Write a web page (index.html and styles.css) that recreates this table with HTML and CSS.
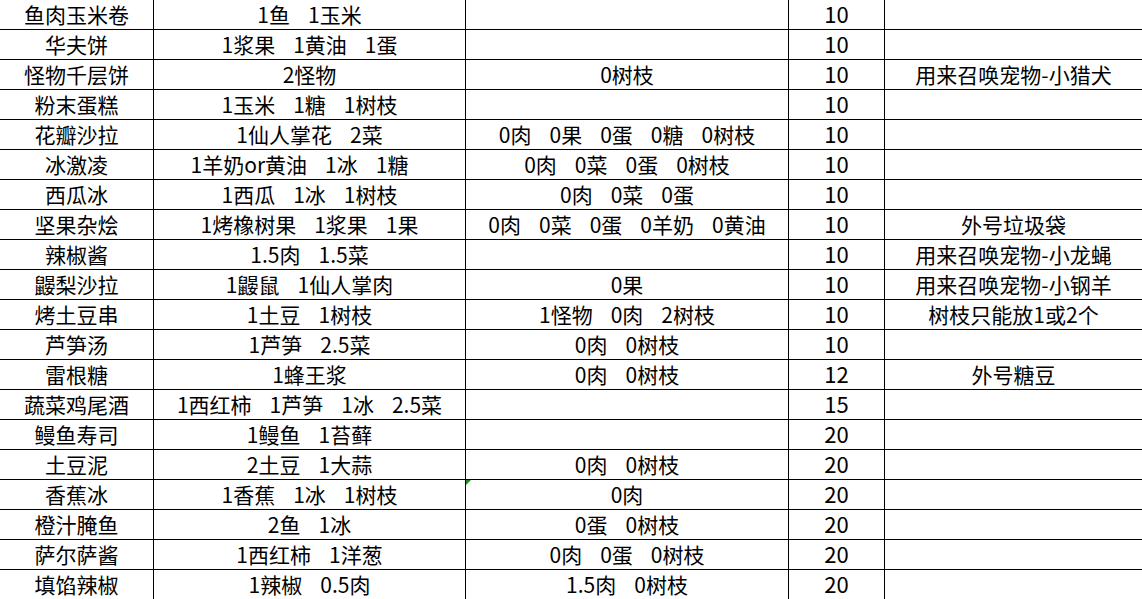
FILE: index.html
```html
<!DOCTYPE html>
<html lang="zh-CN">
<head>
<meta charset="utf-8">
<title>食谱</title>
<link rel="stylesheet" href="styles.css">
</head>
<body>
<div class="sheet">
  <div class="row"><div class="c c1">鱼肉玉米卷</div><div class="c c2"><span>1鱼</span><span>1玉米</span></div><div class="c c3"></div><div class="c c4">10</div><div class="c c5"></div></div>
  <div class="row"><div class="c c1">华夫饼</div><div class="c c2"><span>1浆果</span><span>1黄油</span><span>1蛋</span></div><div class="c c3"></div><div class="c c4">10</div><div class="c c5"></div></div>
  <div class="row"><div class="c c1">怪物千层饼</div><div class="c c2"><span>2怪物</span></div><div class="c c3"><span>0树枝</span></div><div class="c c4">10</div><div class="c c5">用来召唤宠物-小猎犬</div></div>
  <div class="row"><div class="c c1">粉末蛋糕</div><div class="c c2"><span>1玉米</span><span>1糖</span><span>1树枝</span></div><div class="c c3"></div><div class="c c4">10</div><div class="c c5"></div></div>
  <div class="row"><div class="c c1">花瓣沙拉</div><div class="c c2"><span>1仙人掌花</span><span>2菜</span></div><div class="c c3"><span>0肉</span><span>0果</span><span>0蛋</span><span>0糖</span><span>0树枝</span></div><div class="c c4">10</div><div class="c c5"></div></div>
  <div class="row"><div class="c c1">冰激凌</div><div class="c c2 shift"><span>1羊奶or黄油</span><span>1冰</span><span>1糖</span></div><div class="c c3"><span>0肉</span><span>0菜</span><span>0蛋</span><span>0树枝</span></div><div class="c c4">10</div><div class="c c5"></div></div>
  <div class="row"><div class="c c1">西瓜冰</div><div class="c c2"><span>1西瓜</span><span>1冰</span><span>1树枝</span></div><div class="c c3"><span>0肉</span><span>0菜</span><span>0蛋</span></div><div class="c c4">10</div><div class="c c5"></div></div>
  <div class="row"><div class="c c1">坚果杂烩</div><div class="c c2"><span>1烤橡树果</span><span>1浆果</span><span>1果</span></div><div class="c c3"><span>0肉</span><span>0菜</span><span>0蛋</span><span>0羊奶</span><span>0黄油</span></div><div class="c c4">10</div><div class="c c5">外号垃圾袋</div></div>
  <div class="row"><div class="c c1">辣椒酱</div><div class="c c2"><span>1.5肉</span><span>1.5菜</span></div><div class="c c3"></div><div class="c c4">10</div><div class="c c5">用来召唤宠物-小龙蝇</div></div>
  <div class="row"><div class="c c1">鼹梨沙拉</div><div class="c c2"><span>1鼹鼠</span><span>1仙人掌肉</span></div><div class="c c3"><span>0果</span></div><div class="c c4">10</div><div class="c c5">用来召唤宠物-小钢羊</div></div>
  <div class="row"><div class="c c1">烤土豆串</div><div class="c c2"><span>1土豆</span><span>1树枝</span></div><div class="c c3"><span>1怪物</span><span>0肉</span><span>2树枝</span></div><div class="c c4">10</div><div class="c c5">树枝只能放1或2个</div></div>
  <div class="row"><div class="c c1">芦笋汤</div><div class="c c2"><span>1芦笋</span><span>2.5菜</span></div><div class="c c3"><span>0肉</span><span>0树枝</span></div><div class="c c4">10</div><div class="c c5"></div></div>
  <div class="row"><div class="c c1">雷根糖</div><div class="c c2"><span>1蜂王浆</span></div><div class="c c3"><span>0肉</span><span>0树枝</span></div><div class="c c4">12</div><div class="c c5">外号糖豆</div></div>
  <div class="row"><div class="c c1">蔬菜鸡尾酒</div><div class="c c2"><span>1西红柿</span><span>1芦笋</span><span>1冰</span><span>2.5菜</span></div><div class="c c3"></div><div class="c c4">15</div><div class="c c5"></div></div>
  <div class="row"><div class="c c1">鳗鱼寿司</div><div class="c c2"><span>1鳗鱼</span><span>1苔藓</span></div><div class="c c3"></div><div class="c c4">20</div><div class="c c5"></div></div>
  <div class="row"><div class="c c1">土豆泥</div><div class="c c2"><span>2土豆</span><span>1大蒜</span></div><div class="c c3"><span>0肉</span><span>0树枝</span></div><div class="c c4">20</div><div class="c c5"></div></div>
  <div class="row"><div class="c c1">香蕉冰</div><div class="c c2"><span>1香蕉</span><span>1冰</span><span>1树枝</span></div><div class="c c3 flag"><span>0肉</span></div><div class="c c4">20</div><div class="c c5"></div></div>
  <div class="row"><div class="c c1">橙汁腌鱼</div><div class="c c2"><span>2鱼</span><span>1冰</span></div><div class="c c3"><span>0蛋</span><span>0树枝</span></div><div class="c c4">20</div><div class="c c5"></div></div>
  <div class="row"><div class="c c1">萨尔萨酱</div><div class="c c2"><span>1西红柿</span><span>1洋葱</span></div><div class="c c3"><span>0肉</span><span>0蛋</span><span>0树枝</span></div><div class="c c4">20</div><div class="c c5"></div></div>
  <div class="row"><div class="c c1">填馅辣椒</div><div class="c c2"><span>1辣椒</span><span>0.5肉</span></div><div class="c c3"><span>1.5肉</span><span>0树枝</span></div><div class="c c4">20</div><div class="c c5"></div></div>
</div>
</body>
</html>
```

FILE: styles.css
```css
html, body {
  margin: 0;
  padding: 0;
  background: #ffffff;
}

body {
  width: 1142px;
  height: 599px;
  overflow: hidden;
  font-family: "Noto Sans CJK SC", "Noto Sans", sans-serif;
  font-size: 21px;
  color: #000000;
}

.sheet {
  display: flex;
  flex-direction: column;
}

.row {
  display: grid;
  grid-template-columns: 154px 312px 323px 96px 257px;
  height: 30px;
}

.c {
  display: flex;
  align-items: center;
  justify-content: center;
  gap: 18px;
  border-bottom: 1px solid #000000;
  border-right: 1px solid #000000;
  white-space: nowrap;
  line-height: 1;
  position: relative;
}

.c4 {
  font-size: 22px;
  line-height: 24px;
  align-items: flex-start;
  padding-top: 1px;
}

.c5 {
  border-right: none;
}

.shift {
  padding-right: 20px;
}

.flag::before {
  content: "";
  position: absolute;
  left: 0;
  top: 0;
  width: 0;
  height: 0;
  border-top: 5px solid #1f8a1f;
  border-right: 5px solid transparent;
}
```
